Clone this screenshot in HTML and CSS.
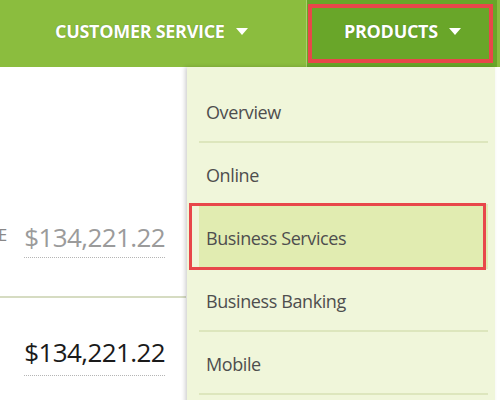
FILE: index.html
```html
<!DOCTYPE html>
<html lang="en">
<head>
  <meta charset="UTF-8" />
  <meta name="viewport" content="width=device-width, initial-scale=1" />
  <title>Products</title>
  <link rel="stylesheet" href="styles.css">
</head>
<body>

<header class="topbar">
  <nav class="menu">
    <div class="menu-item">CUSTOMER SERVICE <span class="caret"></span></div>
    <div class="menu-item menu-item-active">PRODUCTS <span class="caret"></span></div>
  </nav>
</header>

<main class="content">
  <div class="accounts">
    <div class="account-row account-row-first">
      <span class="label">AVAILABLE BALANCE</span>
      <span class="amount muted">$134,221.22</span>
    </div>
    <div class="account-row account-row-second">
      <span class="amount">$134,221.22</span>
    </div>
  </div>

  <!-- products dropdown -->
  <ul class="dropdown">
    <li><a href="#">Overview</a></li>
    <li><a href="#">Online</a></li>
    <li class="active"><a href="#">Business Services</a></li>
    <li><a href="#">Business Banking</a></li>
    <li><a href="#">Mobile</a></li>
  </ul>
</main>

</body>
</html>
```

FILE: styles.css
```css
body {
  margin: 0;
  width: 500px;
  height: 400px;
  overflow: hidden;
  font-family: "Open Sans", Arial, sans-serif;
  background: #fff;
}
.topbar {
  height: 67px;
  background: #8bbd3e;
}
.menu {
  display: flex;
  height: 100%;
}
.menu-item {
  display: flex;
  align-items: center;
  gap: 11px;
  height: 61px;
  padding: 0 0 6px 55px;
  width: 251px;
  color: #fff;
  font-size: 18px;
  font-weight: 700;
  letter-spacing: -0.3px;
  text-shadow: 0 0 1px rgba(40,70,10,0.5);
  border-right: 1px solid #a8d06c;
}
.menu-item-active {
  position: relative;
  width: 153px;
  padding-left: 37px;
  background: #69a629;
  border-right: none;
}
.menu-item-active::after {
  content: "";
  position: absolute;
  top: 4px;
  left: 1px;
  right: 4px;
  bottom: 4px;
  border: 4px solid #e8474a;
}
.caret {
  width: 0;
  height: 0;
  border-left: 6px solid transparent;
  border-right: 6px solid transparent;
  border-top: 7px solid #fff;
  margin-top: 1px;
}
.content {
  position: relative;
  height: 333px;
}
.accounts {
  width: 186px;
}
.account-row {
  display: flex;
  justify-content: flex-end;
  align-items: flex-end;
  gap: 17px;
  padding-right: 21px;
  overflow: hidden;
}
.account-row-first {
  height: 191px;
  padding-bottom: 38px;
  border-bottom: 2px solid #d6dcc2;
}
.account-row-second {
  align-items: flex-start;
  padding-top: 39px;
}
.label {
  flex-shrink: 0;
  white-space: nowrap;
  font-size: 16px;
  color: #888;
  margin-bottom: 12px;
}
.amount {
  flex-shrink: 0;
  white-space: nowrap;
  font-size: 26px;
  letter-spacing: -0.6px;
  color: #1a1a1a;
  line-height: 30px;
  padding-bottom: 5px;
  border-bottom: 1px dotted #b5b5b5;
}
.account-row-second .amount {
  padding-bottom: 8px;
}
.muted {
  color: #9b9b9b;
}
.dropdown {
  position: absolute;
  top: 0;
  left: 187px;
  width: 308px;
  height: 340px;
  margin: 0;
  padding: 13px 0 0;
  list-style: none;
  background: #f0f6da;
  box-shadow: -2px 0 4px rgba(0,0,0,0.18);
}
.dropdown li {
  position: relative;
  margin: 0 7px 0 12px;
  border-bottom: 2px solid #dde6bd;
}
.dropdown a {
  display: block;
  height: 61px;
  line-height: 64px;
  padding-left: 7px;
  font-size: 18px;
  letter-spacing: -0.4px;
  color: #4e4e4e;
  text-decoration: none;
}
.dropdown li.active {
  background: #e1ecb1;
}
.dropdown li.active::after {
  content: "";
  position: absolute;
  top: -3px;
  left: -10px;
  right: 2px;
  bottom: -3px;
  border: 3px solid #e8474a;
}
```
